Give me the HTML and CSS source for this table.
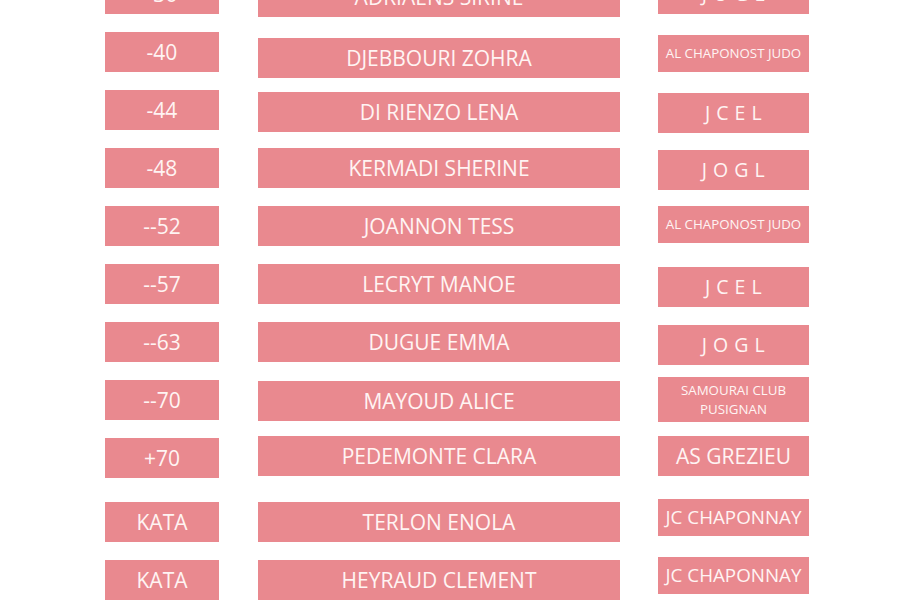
FILE: index.html
```html
<!DOCTYPE html>
<html lang="fr">
<head>
<meta charset="utf-8">
<title>Résultats</title>
<link rel="stylesheet" href="styles.css">
</head>
<body>
<main class="board">
  <div class="row">
    <div class="cell c1">-36</div>
    <div class="cell c2 dn3">ADRIAENS SIRINE</div>
    <div class="cell c3 spaced">J O G L</div>
  </div>
  <div class="row">
    <div class="cell c1">-40</div>
    <div class="cell c2 dn6">DJEBBOURI ZOHRA</div>
    <div class="cell c3 dn3 short small">AL CHAPONOST JUDO</div>
  </div>
  <div class="row">
    <div class="cell c1">-44</div>
    <div class="cell c2 dn2">DI RIENZO LENA</div>
    <div class="cell c3 dn3 spaced">J C E L</div>
  </div>
  <div class="row">
    <div class="cell c1">-48</div>
    <div class="cell c2">KERMADI SHERINE</div>
    <div class="cell c3 dn2 spaced">J O G L</div>
  </div>
  <div class="row">
    <div class="cell c1">--52</div>
    <div class="cell c2">JOANNON TESS</div>
    <div class="cell c3 short small">AL CHAPONOST JUDO</div>
  </div>
  <div class="row">
    <div class="cell c1">--57</div>
    <div class="cell c2">LECRYT MANOE</div>
    <div class="cell c3 dn3 spaced">J C E L</div>
  </div>
  <div class="row">
    <div class="cell c1">--63</div>
    <div class="cell c2">DUGUE EMMA</div>
    <div class="cell c3 dn3 spaced">J O G L</div>
  </div>
  <div class="row">
    <div class="cell c1">--70</div>
    <div class="cell c2 dn1">MAYOUD ALICE</div>
    <div class="cell c3 up3 tall small">SAMOURAI CLUB<br>PUSIGNAN</div>
  </div>
  <div class="row wide">
    <div class="cell c1">+70</div>
    <div class="cell c2 up2">PEDEMONTE CLARA</div>
    <div class="cell c3 up2">AS GREZIEU</div>
  </div>
  <div class="row">
    <div class="cell c1">KATA</div>
    <div class="cell c2">TERLON ENOLA</div>
    <div class="cell c3 up3 short club">JC CHAPONNAY</div>
  </div>
  <div class="row">
    <div class="cell c1">KATA</div>
    <div class="cell c2">HEYRAUD CLEMENT</div>
    <div class="cell c3 up3 short club">JC CHAPONNAY</div>
  </div>
</main>
</body>
</html>
```
FILE: styles.css
```css
html, body {
  margin: 0;
  padding: 0;
  background: #ffffff;
}

body {
  width: 900px;
  height: 615px;
  overflow: hidden;
  font-family: "Open Sans", "Noto Sans", sans-serif;
}

.board {
  display: flex;
  flex-direction: column;
  gap: 18px;
  padding-left: 105px;
  margin-top: -26px;
}

.row {
  display: flex;
  align-items: flex-start;
  height: 40px;
}

.row.wide {
  margin-bottom: 6px;
}

.cell {
  display: flex;
  align-items: center;
  justify-content: center;
  height: 40px;
  background: #e9898f;
  color: #fff4f3;
  font-size: 21px;
  line-height: 1;
  text-align: center;
  box-sizing: border-box;
  white-space: nowrap;
}

.c1 {
  width: 114px;
  margin-right: 39px;
}

.c2 {
  width: 362px;
  margin-right: 38px;
}

.c3 {
  width: 151px;
}

.short { height: 37px; }
.tall { height: 45px; }

.small {
  font-size: 13.3px;
  line-height: 19px;
}

.club {
  font-size: 18.8px;
}

.spaced {
  font-size: 19.5px;
  letter-spacing: 0.5px;
}

.dn1 { margin-top: 1px; }
.dn2 { margin-top: 2px; }
.dn3 { margin-top: 3px; }
.dn6 { margin-top: 6px; }
.up2 { margin-top: -2px; }
.up3 { margin-top: -3px; }
```
